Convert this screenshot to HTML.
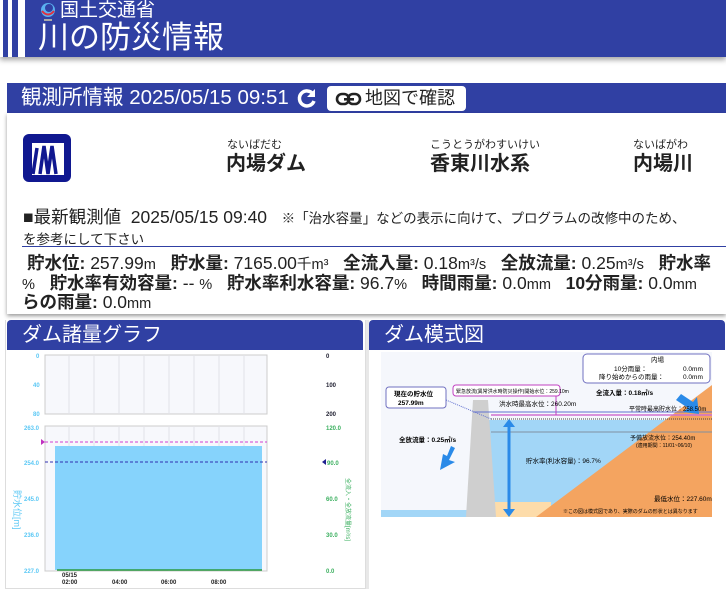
<!DOCTYPE html>
<html><head><meta charset="utf-8"><style>
*{margin:0;padding:0;box-sizing:border-box}
body{width:726px;height:589px;overflow:hidden;background:#fff;font-family:"Liberation Sans","Noto Sans CJK JP",sans-serif;position:relative;color:#222}
.a{position:absolute}
.hd{left:0;top:0;width:726px;height:57px;background:#3040a3;box-shadow:0 3px 5px rgba(0,0,0,.35)}
.bar{background:#3040a3;color:#fff}
.k{font-weight:bold}
.r{font-size:11px;line-height:12px}
</style></head><body>
<div class="a hd"></div>
<div class="a" style="left:0;top:0;width:3px;height:57px;background:#fff"></div>
<div class="a" style="left:8px;top:0;width:4px;height:57px;background:#fff"></div>
<div class="a" style="left:18px;top:0;width:7px;height:57px;background:#fff"></div>
<svg class="a" style="left:39px;top:2px" width="18" height="20"><circle cx="9" cy="8" r="7" fill="#5ab0f0"/><circle cx="10" cy="6" r="4" fill="#3040a3"/><path d="M3 9 Q9 16 15 9" stroke="#e03040" stroke-width="2" fill="none"/><rect x="5" y="17" width="8" height="2" fill="#aaa"/></svg>
<div class="a" style="left:60px;top:0px;color:#fff;font-size:19px;line-height:22px">国土交通省</div>
<div class="a" style="left:38px;top:20px;color:#fff;font-size:31px;line-height:36px">川の防災情報</div>

<div class="a bar" style="left:7px;top:83px;width:719px;height:30px"></div>
<div class="a" style="left:21px;top:85px;color:#fff;font-size:20.5px;line-height:26px;white-space:nowrap">観測所情報 2025/05/15 09:51</div>
<svg class="a" style="left:296px;top:87px" width="22" height="22"><path d="M17 7 A7.5 7.5 0 1 0 18 14" stroke="#fff" stroke-width="3.5" fill="none"/><path d="M19 2 L19 10 L11 10 Z" fill="#fff"/></svg>
<div class="a" style="left:327px;top:86px;width:139px;height:25px;background:#fff;border-radius:4px;font-size:18px;line-height:25px;padding-left:38px;color:#222">地図で確認</div>
<svg class="a" style="left:335px;top:91px" width="30" height="16"><rect x="2" y="3" width="12" height="10" rx="5" stroke="#222" stroke-width="2.6" fill="none"/><rect x="13" y="3" width="12" height="10" rx="5" stroke="#222" stroke-width="2.6" fill="none"/><rect x="9" y="7" width="10" height="2.6" fill="#222"/></svg>

<div class="a" style="left:7px;top:113px;width:719px;height:201px;background:#fff;box-shadow:0 2px 4px rgba(0,0,0,.4)"></div>
<svg class="a" style="left:23px;top:134px" width="48" height="48"><rect width="48" height="48" rx="6" fill="#101890"/><rect x="9" y="9" width="32" height="32" fill="#fff"/><path d="M10 40 L14 14 M17 40 L21 12 L25 40 L29 12 L33 40" stroke="#101890" stroke-width="3.5" fill="none"/></svg>
<div class="a r" style="left:227px;top:139px">ないばだむ</div>
<div class="a k" style="left:226px;top:152px;font-size:20px;line-height:24px">内場ダム</div>
<div class="a r" style="left:430px;top:139px">こうとうがわすいけい</div>
<div class="a k" style="left:430px;top:152px;font-size:20px;line-height:24px">香東川水系</div>
<div class="a r" style="left:633px;top:139px">ないばがわ</div>
<div class="a k" style="left:633px;top:152px;font-size:20px;line-height:24px">内場川</div>
<div class="a" style="left:23px;top:204px;font-size:17.5px;white-space:nowrap">■最新観測値&nbsp; 2025/05/15 09:40 &nbsp;&nbsp;<span style="font-size:13.5px">※「治水容量」などの表示に向けて、プログラムの改修中のため、</span></div>
<div class="a" style="left:23px;top:228px;font-size:13.5px">を参考にして下さい</div>
<div class="a" style="left:22px;top:246px;width:704px;height:1px;background:#3040a3"></div>
<div class="a" style="left:27px;top:253px;font-size:17.5px;line-height:20px;white-space:nowrap"><b>貯水位:</b> 257.99<small>m</small>&nbsp;&nbsp; <b>貯水量:</b> 7165.00<small>千m³</small>&nbsp;&nbsp; <b>全流入量:</b> 0.18<small>m³/s</small>&nbsp;&nbsp; <b>全放流量:</b> 0.25<small>m³/s</small>&nbsp;&nbsp; <b>貯水率</b></div>
<div class="a" style="left:22px;top:273px;font-size:17.5px;line-height:20px;white-space:nowrap"><small>%</small>&nbsp;&nbsp; <b>貯水率有効容量:</b> -- <small>%</small>&nbsp;&nbsp; <b>貯水率利水容量:</b> 96.7<small>%</small>&nbsp;&nbsp; <b>時間雨量:</b> 0.0<small>mm</small>&nbsp;&nbsp; <b>10分雨量:</b> 0.0<small>mm</small></div>
<div class="a" style="left:22px;top:292px;font-size:17.5px;line-height:20px"><b>らの雨量:</b> 0.0<small>mm</small></div>

<div class="a" style="left:5px;top:320px;width:361px;height:269px;border:1px solid #ddd;border-top:none"></div>
<div class="a bar" style="left:7px;top:320px;width:356px;height:30px;border-radius:4px 4px 0 0;font-size:20px;line-height:30px;padding-left:15px">ダム諸量グラフ</div>
<div class="a" style="left:366px;top:320px;width:360px;height:269px;border-left:3px solid #e8e8e8"></div>
<div class="a bar" style="left:369px;top:320px;width:356px;height:30px;border-radius:4px 4px 0 0;font-size:20px;line-height:30px;padding-left:15px">ダム模式図</div>

<svg class="a" style="left:0;top:350px" width="363" height="239" font-family="Liberation Sans" font-size="6" font-weight="bold">
<rect x="45" y="5" width="222" height="59" fill="#f7f8fc" stroke="#ccc"/>
<g stroke="#e2e2e8"><line x1="69" y1="5" x2="69" y2="64"/><line x1="94" y1="5" x2="94" y2="64"/><line x1="119" y1="5" x2="119" y2="64"/><line x1="144" y1="5" x2="144" y2="64"/><line x1="169" y1="5" x2="169" y2="64"/><line x1="194" y1="5" x2="194" y2="64"/><line x1="219" y1="5" x2="219" y2="64"/><line x1="244" y1="5" x2="244" y2="64"/></g>
<text x="36" y="8" fill="#5bc8f5">0</text><text x="33" y="37" fill="#5bc8f5">40</text><text x="33" y="66" fill="#5bc8f5">80</text>
<text x="326" y="8" fill="#223">0</text><text x="326" y="37" fill="#223">100</text><text x="326" y="66" fill="#223">200</text>
<rect x="45" y="76" width="222" height="145" fill="#f7f8fc" stroke="#ccc"/>
<g stroke="#e2e2e8"><line x1="69" y1="76" x2="69" y2="221"/><line x1="94" y1="76" x2="94" y2="221"/><line x1="119" y1="76" x2="119" y2="221"/><line x1="144" y1="76" x2="144" y2="221"/><line x1="169" y1="76" x2="169" y2="221"/><line x1="194" y1="76" x2="194" y2="221"/><line x1="219" y1="76" x2="219" y2="221"/><line x1="244" y1="76" x2="244" y2="221"/></g>
<rect x="55" y="96" width="207" height="124" fill="#86d3fc"/>
<line x1="45" y1="92" x2="267" y2="92" stroke="#d040d0" stroke-dasharray="3,2"/>
<line x1="45" y1="112" x2="267" y2="112" stroke="#3030b0" stroke-dasharray="3,2"/>
<line x1="57" y1="220" x2="262" y2="220" stroke="#2a9a40" stroke-width="1.5"/>
<path d="M41 89 L45 92 L41 95Z" fill="#c030c0"/><path d="M326 109 L322 112 L326 115Z" fill="#202090"/>
<text x="24" y="80" fill="#5bc8f5">263.0</text><text x="24" y="115" fill="#5bc8f5">254.0</text><text x="24" y="151" fill="#5bc8f5">245.0</text><text x="24" y="187" fill="#5bc8f5">236.0</text><text x="24" y="223" fill="#5bc8f5">227.0</text>
<text x="326" y="80" fill="#3cb060">120.0</text><text x="327" y="115" fill="#3cb060">90.0</text><text x="326" y="151" fill="#3cb060">60.0</text><text x="326" y="187" fill="#3cb060">30.0</text><text x="326" y="223" fill="#3cb060">0.0</text>
<text x="62" y="227" fill="#222">05/15</text><text x="62" y="234" fill="#222">02:00</text><text x="112" y="234" fill="#222">04:00</text><text x="161" y="234" fill="#222">06:00</text><text x="211" y="234" fill="#222">08:00</text>
<text x="14" y="140" fill="#5bc8f5" font-size="9" font-weight="normal" transform="rotate(90 14 140)">貯水位[m]</text>
<text x="346" y="128" fill="#3cb060" font-size="6" font-weight="normal" transform="rotate(90 346 128)">全流入・全放流量[m³/s]</text>
</svg>

<svg class="a" style="left:381px;top:352px" width="331" height="165" font-family="Liberation Sans,Noto Sans CJK JP" font-size="6.5">
<rect width="331" height="165" fill="#f5f7fc"/>
<path d="M108 68 L331 68 L331 165 L108 165Z" fill="#a2d6f7"/>
<rect x="0" y="158" width="90" height="7" fill="#a2d6f7"/>
<rect x="110" y="150" width="60" height="15" fill="#fddcaa"/>
<path d="M155 165 L331 33 L331 165Z" fill="#f4a460"/>
<path d="M92 48 L107 48 L115 165 L85 165Z" fill="#cfcfcf"/>
<line x1="92" y1="60" x2="331" y2="60" stroke="#6070d0"/>
<line x1="110" y1="63" x2="331" y2="63" stroke="#d070d0" stroke-width="1.5"/>
<line x1="110" y1="67" x2="331" y2="67" stroke="#444" stroke-dasharray="1,1"/>
<line x1="110" y1="80" x2="331" y2="80" stroke="#8090a0"/>
<rect x="202" y="2" width="127" height="29" rx="4" fill="#fff" stroke="#7070c0"/>
<text x="270" y="10">内場</text><text x="233" y="19">10分雨量：</text><text x="302" y="19">0.0mm</text><text x="218" y="27">降り始めからの雨量：</text><text x="302" y="27">0.0mm</text>
<rect x="5" y="35" width="60" height="21" rx="3" fill="#fff" stroke="#7070c0"/>
<text x="13" y="44" font-weight="bold">現在の貯水位</text><text x="17" y="53" font-weight="bold">257.99m</text>
<line x1="65" y1="48" x2="110" y2="67" stroke="#6070d0" stroke-dasharray="1,1"/>
<rect x="72" y="33" width="107" height="11" rx="3" fill="#fff" stroke="#c040c0"/>
<text x="75" y="41" font-size="5">緊急放流(異常洪水時防災操作)開始水位：259.10m</text>
<line x1="175" y1="44" x2="175" y2="63" stroke="#c040c0"/>
<text x="118" y="54">洪水時最高水位：260.20m</text>
<text x="215" y="43" font-weight="bold">全流入量：0.18㎥/s</text>
<path d="M300 42 L312 50 L316 45 L318 62 L302 60 L307 56 L295 48Z" fill="#2a8ae8"/>
<text x="248" y="59" font-size="6">平常時最高貯水位：258.50m</text>
<text x="249" y="88" font-size="6">予備放流水位：254.40m</text><text x="255" y="95" font-size="5">(適用期間：11/01~06/10)</text>
<text x="18" y="90" font-weight="bold">全放流量：0.25㎥/s</text>
<path d="M74 96 L68 108 L74 110 L59 118 L62 102 L66 104 L70 94Z" fill="#2a8ae8"/>
<line x1="128" y1="72" x2="128" y2="160" stroke="#2a8ae8" stroke-width="3"/>
<path d="M122 75 L128 67 L134 75Z M122 157 L128 165 L134 157Z" fill="#2a8ae8"/>
<text x="145" y="111">貯水率(利水容量)：96.7%</text>
<text x="273" y="149">最低水位：227.60m</text>
<text x="182" y="161" font-size="5">※この図は模式図であり、実際のダムの形状とは異なります</text>
</svg>
</body></html>
